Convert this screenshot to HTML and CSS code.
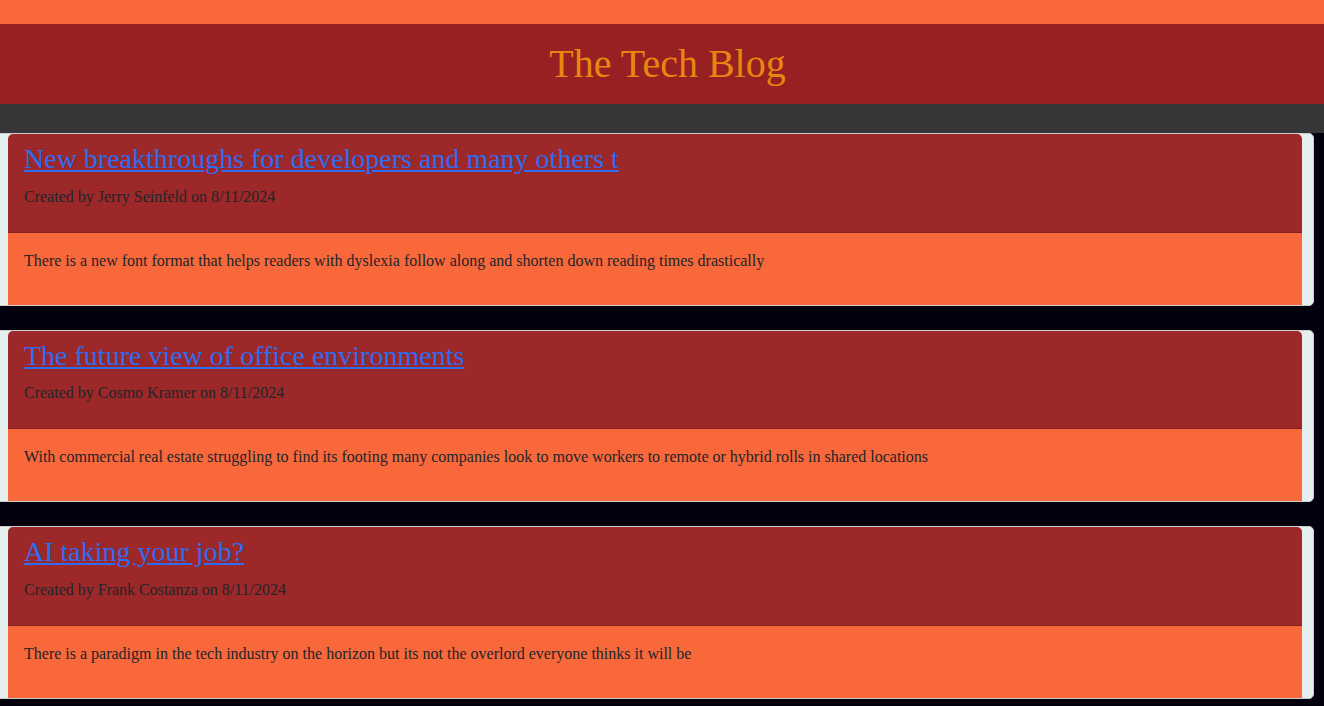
FILE: index.html
```html
<!DOCTYPE html>
<html lang="en">
<head>
<meta charset="utf-8">
<title>The Tech Blog</title>
<link rel="stylesheet" href="styles.css">
</head>
<body>
<div class="top-band"></div>
<header class="site-header">
  <h1 class="site-title">The Tech Blog</h1>
</header>
<nav class="site-nav"></nav>
<main class="posts">
  <article class="card">
    <div class="card-header">
      <h2 class="post-title"><a href="#">New breakthroughs for developers and many others t</a></h2>
      <p class="post-meta">Created by Jerry Seinfeld on 8/11/2024</p>
    </div>
    <div class="card-body">
      <p>There is a new font format that helps readers with dyslexia follow along and shorten down reading times drastically</p>
    </div>
  </article>
  <article class="card">
    <div class="card-header">
      <h2 class="post-title"><a href="#">The future view of office environments</a></h2>
      <p class="post-meta">Created by Cosmo Kramer on 8/11/2024</p>
    </div>
    <div class="card-body">
      <p>With commercial real estate struggling to find its footing many companies look to move workers to remote or hybrid rolls in shared locations</p>
    </div>
  </article>
  <article class="card">
    <div class="card-header">
      <h2 class="post-title"><a href="#">AI taking your job?</a></h2>
      <p class="post-meta">Created by Frank Costanza on 8/11/2024</p>
    </div>
    <div class="card-body">
      <p>There is a paradigm in the tech industry on the horizon but its not the overlord everyone thinks it will be</p>
    </div>
  </article>
</main>
</body>
</html>
```
FILE: styles.css
```css
html, body {
  margin: 0;
  padding: 0;
}
body {
  background: #04010e;
  font-family: "Liberation Serif", "Times New Roman", serif;
  font-size: 16px;
  line-height: 1.5;
  color: #212529;
  overflow: hidden;
}
.top-band {
  height: 24px;
  background: #f9683b;
}
.site-header {
  height: 80px;
  background: #962022;
  display: flex;
  align-items: center;
  justify-content: center;
  padding-left: 11px;
}
.site-title {
  margin: 0;
  font-weight: normal;
  font-size: 40px;
  line-height: 1.2;
  color: #e8870f;
}
.site-nav {
  height: 29px;
  background: #363638;
}
.posts {
  display: flex;
  flex-direction: column;
  gap: 24px;
}
.card {
  margin: 0 10px 0 -4px;
  padding: 0 11px;
  background: #e5efee;
  border: 1px solid #c9cfcf;
  border-radius: 5px;
}
.card-header {
  background: #9c2829;
  border-radius: 5px 5px 0 0;
  border-bottom: 1px solid #85201f;
  padding: 8px 16px 8px;
}
.post-title {
  margin: 0 0 9px;
  font-weight: normal;
  font-size: 28px;
  line-height: 1.2;
}
.post-title a {
  color: #2d6cf3;
  text-decoration: underline;
}
.post-meta {
  margin: 0 0 15px;
}
.card-body {
  background: #f9683b;
  padding: 16px;
}
.card-body p {
  margin: 0 0 16px;
}
```
